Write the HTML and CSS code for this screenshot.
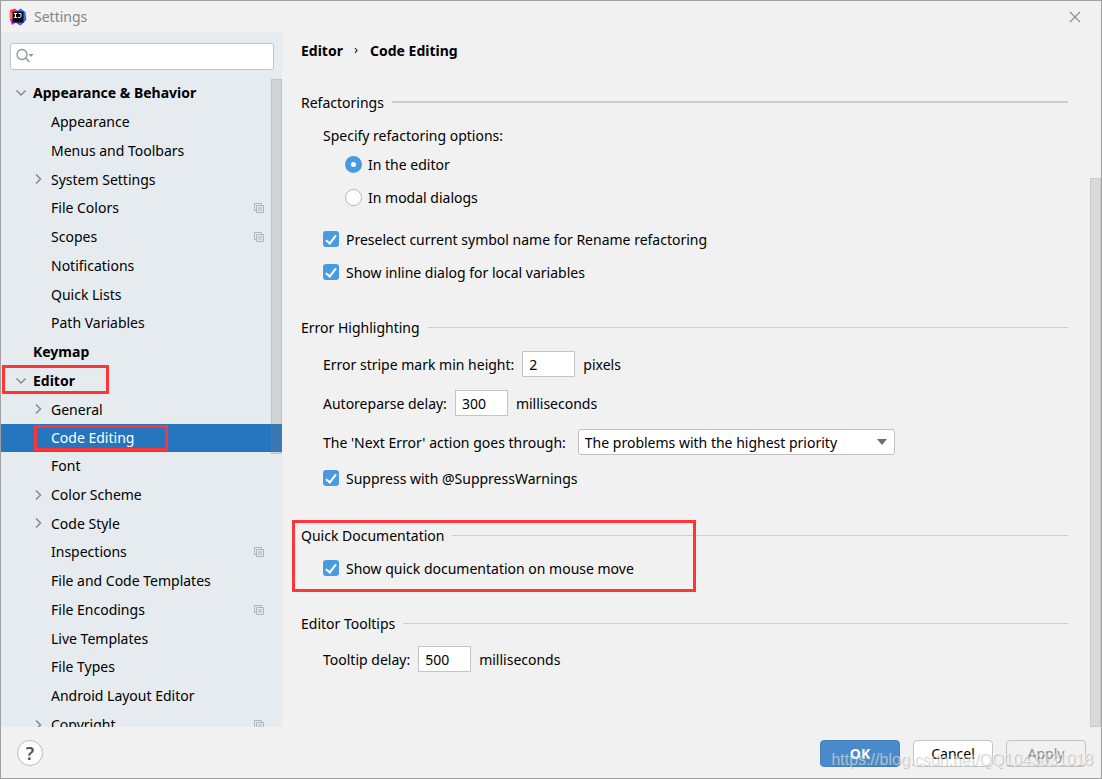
FILE: index.html
```
<!DOCTYPE html>
<html lang="en">
<head>
<meta charset="utf-8">
<title>Settings</title>
<link rel="stylesheet" href="styles.css">
</head>
<body>
<svg class="defs" aria-hidden="true">
  <symbol id="down" viewBox="0 0 12 12"><path d="M1.500 3.500 6 8l4.500-4.500" fill="none" stroke="#868a8d" stroke-width="1.500"/></symbol>
  <symbol id="right" viewBox="0 0 12 12"><path d="M3 1.500 7.500 6 3 10.500" fill="none" stroke="#868a8d" stroke-width="1.500"/></symbol>
  <symbol id="copy" viewBox="0 0 10 10"><path d="M2 7.500H.5V.5h7V2" fill="none" stroke="#aab7bf"/><path d="M2.500 2.500h7v7h-7z" fill="#e3e8ec" stroke="#aab7bf"/><path d="M4 4h4v4H4z" fill="#c6cfd5"/></symbol>
</svg>
<div class="window">
  <header class="titlebar">
    <svg class="logo" viewBox="0 0 18 18" aria-hidden="true">
      <path d="M1 2 6 .5 9 3 8 8 2 12 .8 8z" fill="#fb3c59"/>
      <path d="M.8 11 4 9l4 5-5 3z" fill="#b42ce0"/>
      <path d="M.5 5 4 4.500v7L.5 10z" fill="#fd7a3a"/>
      <path d="m8 3 3.500-2.500L16.500 4l.8 8-5 5L5 14z" fill="#3b6cee"/>
      <path d="m6 14 9 0-4 3.500z" fill="#704ae8"/>
      <path d="M3.500 3.500h11v11h-11z" fill="#0a080e"/>
      <path d="M5 5.500h3M6.500 5.500v4M5 9.500h3M9.500 5.500h2.500v2.800q0 1.200-1.200 1.200H9" fill="none" stroke="#fff"/>
    </svg>
    <h1 class="title">Settings</h1>
    <button class="close" aria-label="Close"><svg viewBox="0 0 12 12"><path d="m1 1 10 10M11 1 1 11" stroke="#8e8e8e" stroke-width="1.100"/></svg></button>
  </header>
  <main class="main">
    <aside class="sidebar">
      <div class="search">
        <svg viewBox="0 0 20 16" aria-hidden="true"><circle cx="6" cy="6.500" r="5" fill="none" stroke="#8d969c" stroke-width="1.300"/><path d="m9.500 10 4 4" stroke="#8d969c" stroke-width="1.500"/><path d="M12.500 6h5L15 9z" fill="#8d969c"/></svg>
        <input type="text" aria-label="Search settings">
      </div>
      <nav class="tree-pane" aria-label="Settings categories">
        <ul class="tree">
          <li class="top"><svg class="arrow"><use href="#down"/></svg><span>Appearance &amp; Behavior</span></li>
          <li><span>Appearance</span></li>
          <li><span>Menus and Toolbars</span></li>
          <li><svg class="arrow"><use href="#right"/></svg><span>System Settings</span></li>
          <li><span>File Colors</span><svg class="copy"><use href="#copy"/></svg></li>
          <li><span>Scopes</span><svg class="copy"><use href="#copy"/></svg></li>
          <li><span>Notifications</span></li>
          <li><span>Quick Lists</span></li>
          <li><span>Path Variables</span></li>
          <li class="top"><span>Keymap</span></li>
          <li class="top"><svg class="arrow"><use href="#down"/></svg><span>Editor</span><i class="mark mark-editor"></i></li>
          <li><svg class="arrow"><use href="#right"/></svg><span>General</span></li>
          <li class="selected" aria-current="page"><span>Code Editing</span><i class="mark mark-code"></i></li>
          <li><span>Font</span></li>
          <li><svg class="arrow"><use href="#right"/></svg><span>Color Scheme</span></li>
          <li><svg class="arrow"><use href="#right"/></svg><span>Code Style</span></li>
          <li><span>Inspections</span><svg class="copy"><use href="#copy"/></svg></li>
          <li><span>File and Code Templates</span></li>
          <li><span>File Encodings</span><svg class="copy"><use href="#copy"/></svg></li>
          <li><span>Live Templates</span></li>
          <li><span>File Types</span></li>
          <li><span>Android Layout Editor</span></li>
          <li><svg class="arrow"><use href="#right"/></svg><span>Copyright</span><svg class="copy"><use href="#copy"/></svg></li>
        </ul>
        <div class="thumb tree-thumb"></div>
      </nav>
    </aside>
    <section class="content">
      <form class="page">
        <h2 class="crumbs"><span>Editor</span><svg viewBox="0 0 5 8" aria-hidden="true"><path d="m1 2 2 2.500L1 7" fill="none" stroke="#222" stroke-width="1.200"/></svg><span>Code Editing</span></h2>
        <section class="group strong">
          <h3>Refactorings</h3>
          <p class="line">Specify refactoring options:</p>
          <div class="radios">
            <label class="line"><input type="radio" name="mode" checked>In the editor</label>
            <label class="line"><input type="radio" name="mode">In modal dialogs</label>
          </div>
          <div class="checks">
            <label class="line"><input type="checkbox" checked>Preselect current symbol name for Rename refactoring</label>
            <label class="line"><input type="checkbox" checked>Show inline dialog for local variables</label>
          </div>
        </section>
        <section class="group">
          <h3>Error Highlighting</h3>
          <div class="fields">
            <div class="line entry"><label for="stripe">Error stripe mark min height:</label><input class="field" id="stripe" type="text" value="2"><span>pixels</span></div>
            <div class="line entry"><label for="reparse">Autoreparse delay:</label><input class="field" id="reparse" type="text" value="300"><span>milliseconds</span></div>
            <div class="line choice"><label for="next">The 'Next Error' action goes through:</label>
              <div class="select"><select id="next"><option>The problems with the highest priority</option></select><svg viewBox="0 0 10 6" aria-hidden="true"><path d="M0 0h10L5 6z" fill="#6e6e6e"/></svg></div></div>
            <label class="line"><input type="checkbox" checked>Suppress with @SuppressWarnings</label>
          </div>
        </section>
        <section class="group">
          <h3>Quick Documentation</h3>
          <label class="line"><input type="checkbox" checked>Show quick documentation on mouse move</label>
          <i class="mark mark-docs"></i>
        </section>
        <section class="group">
          <h3>Editor Tooltips</h3>
          <div class="line entry"><label for="tip">Tooltip delay:</label><input class="field" id="tip" type="text" value="500"><span>milliseconds</span></div>
        </section>
      </form>
      <div class="thumb page-thumb"></div>
    </section>
  </main>
  <footer class="footer">
    <button class="help" aria-label="Help">?</button>
    <button class="btn primary">OK</button>
    <button class="btn">Cancel</button>
    <button class="btn" disabled>Apply</button>
    <span class="watermark">https://blog.csdn.net/QQ1043031018</span>
  </footer>
</div>
</body>
</html>
```
FILE: styles.css
```
* { box-sizing: border-box; }
body { margin: 0; }
body, input, select, button { font-family: "Noto Sans", "Open Sans", sans-serif; font-size: 14px; color: #000; }
h1, h2, h3, p, ul { margin: 0; padding: 0; font-size: 14px; }
.defs { position: absolute; width: 0; height: 0; }
.window { display: flex; flex-direction: column; height: 100vh; background: #f1f1f1; border: 1px solid #a0a0a0; overflow: hidden; }

.titlebar { display: flex; align-items: center; flex: none; height: 31px; padding: 0 20px 0 8px; gap: 7px; }
.logo { width: 18px; height: 18px; }
.title { flex: 1; font-weight: 400; color: #858585; }
.close { width: 12px; height: 12px; padding: 0; border: 0; background: none; display: flex; }
.close svg { width: 12px; height: 12px; }

.main { flex: 1; display: flex; min-height: 0; }
.sidebar { flex: none; width: 281px; display: flex; flex-direction: column; background: #e6ebef; }
.search { position: relative; margin: 11px 8px 9px 9px; }
.search input { display: block; width: 100%; height: 27px; padding: 0 8px 0 28px; border: 1px solid #c1c5c7; border-radius: 3px; background: #fff; }
.search svg { position: absolute; left: 6px; top: 5px; width: 20px; height: 16px; }

.tree-pane { flex: 1; min-height: 0; position: relative; overflow: hidden; }
.tree { list-style: none; }
.tree li { position: relative; display: flex; align-items: center; height: 29px; padding: 0 18px 2px 50px; }
.tree li:nth-child(4n) { height: 28px; }
.tree li.top { padding-left: 32px; font-weight: 700; }
.tree span { flex: 1; white-space: nowrap; }
.tree .selected { background: #2675bf; color: #fff; height: 28px; }
.arrow { width: 12px; height: 12px; margin-left: -18px; margin-right: 6px; }
.copy { width: 10px; height: 10px; }
.thumb { position: absolute; right: 0; background: rgba(130, 130, 130, .22); border: 1px solid rgba(130, 130, 130, .18); }
.tree-thumb { top: 0; width: 11px; height: 375px; }

.mark { position: absolute; border: 3px solid #fb3636; pointer-events: none; }
.mark-editor { left: 1px; top: -2px; width: 107px; height: 29px; z-index: 1; }
.mark-code { left: 33px; top: 1px; width: 134px; height: 26px; }
.mark-docs { left: -9px; top: -5px; bottom: -14px; width: 404px; }

.content { flex: 1; position: relative; min-width: 0; }
.page { padding: 8px 33px 0 19px; }
.crumbs { display: flex; align-items: center; gap: 11px; height: 20px; margin-bottom: 32px; }
.crumbs svg { width: 5px; height: 8px; }
.group { position: relative; margin-bottom: 35px; }
.group h3 { display: flex; align-items: center; gap: 8px; height: 20px; margin-bottom: 13px; font-weight: 400; }
.group h3::after { content: ""; flex: 1; height: 1px; background: #cdcdcd; }
.strong h3::after { height: 2px; }
.line { display: flex; align-items: center; gap: 7px; min-height: 20px; padding-left: 22px; white-space: nowrap; }
.entry { gap: 8px; }
.choice { gap: 12px; }
.radios { display: grid; gap: 13px; margin: 9px 0 22px 22px; }
.checks { display: grid; gap: 13px; }
.fields { display: grid; gap: 13px; padding: 1px 0 2px; }
.fields + .group { margin-top: 0; }
input[type="radio"], input[type="checkbox"] { appearance: none; position: relative; flex: none; width: 16px; height: 16px; margin: 0; border-radius: 3px; }
input[type="radio"] { border: 1px solid #b5b5b5; border-radius: 50%; background: #fff; width: 17px; height: 17px; }
.radios .line { gap: 6px; }
input[type="radio"]:checked { border: 6px solid #4a9ae2; }
input[type="checkbox"] { display: grid; justify-items: center; align-items: start; padding-top: 2px; background: #4a9ae2; }
input[type="checkbox"]::after { content: ""; box-sizing: border-box; width: 6px; height: 11px; border: solid #fff; border-width: 0 2px 2px 0; transform: rotate(38deg); }
.field { width: 53px; height: 26px; padding: 0 6px; border: 1px solid #c4c4c4; background: #fff; }
.select { position: relative; }
.select select { display: block; appearance: none; width: 317px; height: 26px; padding: 0 28px 0 6px; border: 1px solid #c0c0c0; border-radius: 3px; background: #fff; }
.select svg { position: absolute; right: 8px; top: 10px; width: 10px; height: 6px; }
.page-thumb { top: 146px; bottom: 0; width: 11px; }

.footer { position: relative; flex: none; display: flex; align-items: center; gap: 13px; height: 51px; padding: 1px 15px 0 16px; }
.help { width: 26px; height: 26px; margin-right: auto; padding: 0; border: 1px solid #bcbcbc; border-radius: 50%; background: #fff; color: #555; font-size: 18px; line-height: 24px; font-weight: 600; }
.btn { width: 80px; height: 27px; padding: 0; border: 1px solid #c4c4c4; border-radius: 4px; background: #fff; }
.btn.primary { border-color: #4380bd; background: #4b8aca; color: #fff; font-weight: 700; }
.btn:disabled { background: #f1f1f1; color: #8c8c8c; }
.watermark { position: absolute; right: 8px; bottom: 8px; font: 16px/20px "Liberation Sans", sans-serif; color: rgba(255, 255, 255, .5); text-shadow: 1px 1px 1px rgba(120, 120, 120, .4); pointer-events: none; }
```
